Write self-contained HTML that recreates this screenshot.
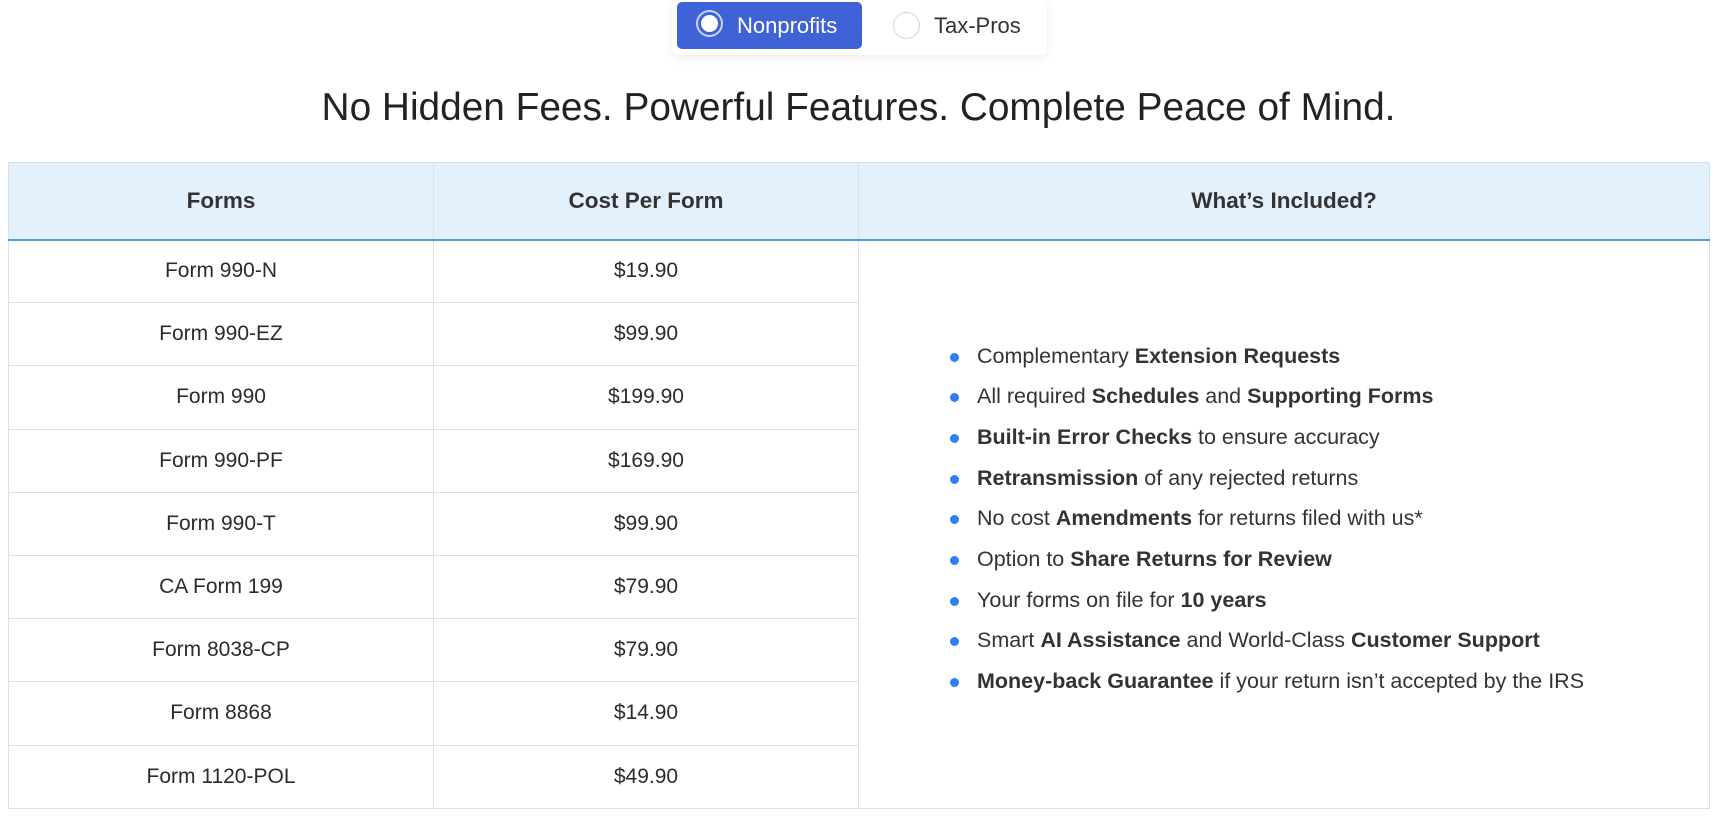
<!DOCTYPE html>
<html><head><meta charset="utf-8"><style>
*{margin:0;padding:0;box-sizing:border-box}
body{width:1717px;height:817px;background:#fff;font-family:"Liberation Sans",Arial,sans-serif;color:#2b2b2b;position:relative;overflow:hidden}
.tog{position:absolute;left:672px;top:0;width:375px;height:55px;background:#fff;border-radius:6px;box-shadow:0 3px 10px rgba(0,0,0,.08)}
.btn{position:absolute;left:5px;top:2px;width:185px;height:47px;background:#3f63d6;border-radius:5px}
.rad{position:absolute;width:27px;height:27px;border-radius:50%}
.r1{left:24px;top:10px;border:2px solid #c9d4f7}
.r1::after{content:"";position:absolute;left:3px;top:3px;width:17px;height:17px;border-radius:50%;background:#fff}
.r2{left:221px;top:12px;border:1.5px solid #d5d5d5}
.t{position:absolute;top:13px;font-size:22px}
h1{position:absolute;top:86px;left:0;width:1717px;text-align:center;font-weight:400;font-size:38.8px;color:#222}
table{position:absolute;left:8px;top:162px;width:1702px;border-collapse:collapse;border:1.5px solid #d6e2ef}
th{background:#e3f1fd;height:77px;font-size:22.5px;font-weight:bold;color:#333;border-right:1.5px solid #d6e2ef;border-bottom:2px solid #4f9de2}
td{height:63.2px;text-align:center;font-size:21px;border:1.5px solid #d6e2ef}
td.inc{text-align:left;vertical-align:top;padding:103px 0 0 91px}
ul{list-style:none}
li{position:relative;padding-left:27px;height:40.7px;font-size:21.5px;color:#333}
li::before{content:"";position:absolute;left:0;top:9px;width:9px;height:9px;border-radius:50%;background:#2f7ff0}
b{font-weight:bold;color:#333}
</style></head><body>
<div class="tog"><div class="btn"></div><div class="rad r1"></div><div class="t" style="left:65px;color:#fff">Nonprofits</div><div class="rad r2"></div><div class="t" style="left:262px;color:#333">Tax-Pros</div></div>
<h1>No Hidden Fees. Powerful Features. Complete Peace of Mind.</h1>
<table>
<tr><th style="width:425px">Forms</th><th style="width:425px">Cost Per Form</th><th>What’s Included?</th></tr>
<tr><td>Form 990-N</td><td>$19.90</td><td class="inc" rowspan="9"><ul>
<li>Complementary <b>Extension Requests</b></li>
<li>All required <b>Schedules</b> and <b>Supporting Forms</b></li>
<li><b>Built-in Error Checks</b> to ensure accuracy</li>
<li><b>Retransmission</b> of any rejected returns</li>
<li>No cost <b>Amendments</b> for returns filed with us*</li>
<li>Option to <b>Share Returns for Review</b></li>
<li>Your forms on file for <b>10 years</b></li>
<li>Smart <b>AI Assistance</b> and World-Class <b>Customer Support</b></li>
<li><b>Money-back Guarantee</b> if your return isn’t accepted by the IRS</li>
</ul></td></tr>
<tr><td>Form 990-EZ</td><td>$99.90</td></tr>
<tr><td>Form 990</td><td>$199.90</td></tr>
<tr><td>Form 990-PF</td><td>$169.90</td></tr>
<tr><td>Form 990-T</td><td>$99.90</td></tr>
<tr><td>CA Form 199</td><td>$79.90</td></tr>
<tr><td>Form 8038-CP</td><td>$79.90</td></tr>
<tr><td>Form 8868</td><td>$14.90</td></tr>
<tr><td>Form 1120-POL</td><td>$49.90</td></tr>
</table>
</body></html>
